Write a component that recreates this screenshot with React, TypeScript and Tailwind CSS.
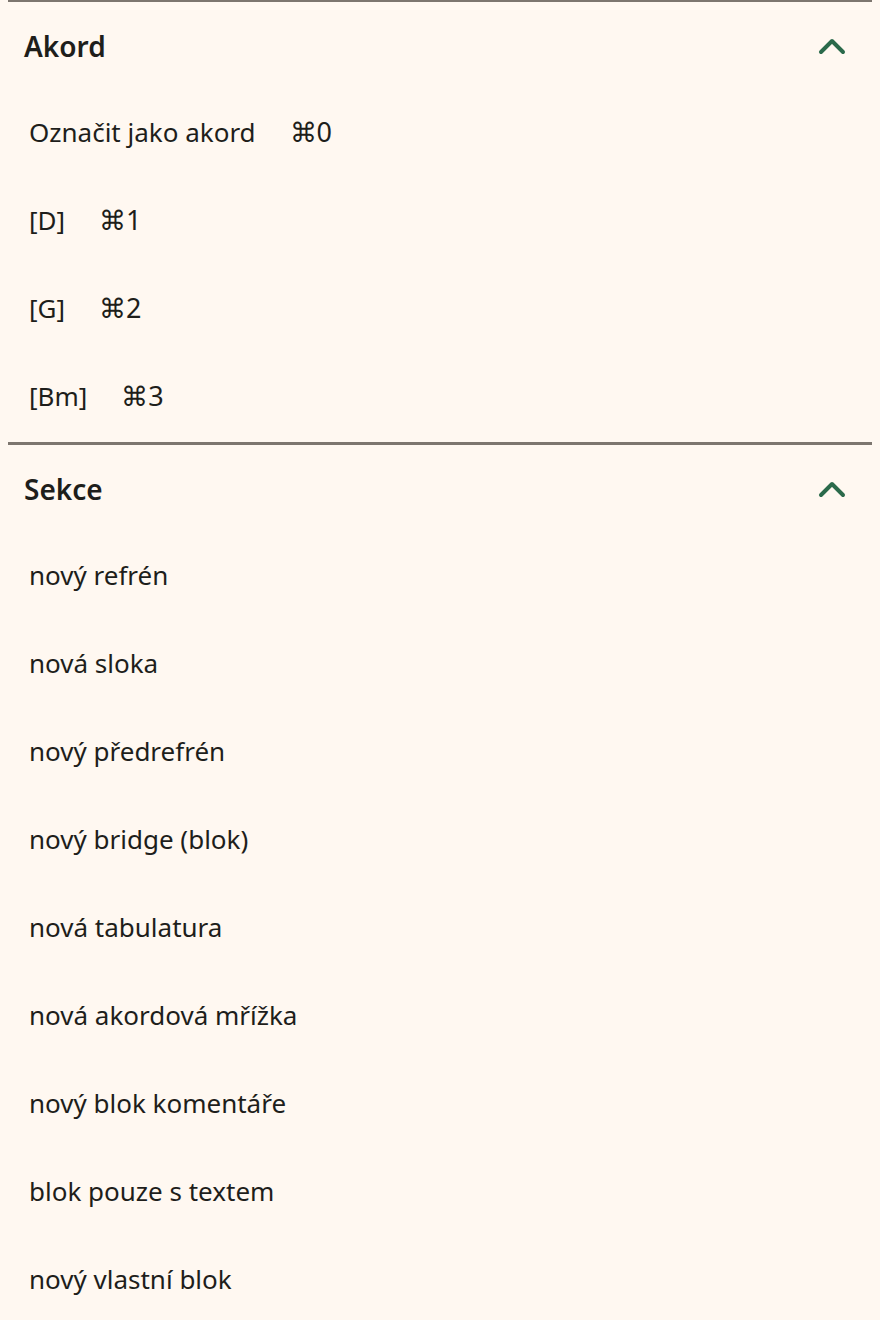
const FONT = { fontFamily: '"Noto Sans", "Open Sans", sans-serif' };

interface Item {
  label: string;
  shortcut?: string;
}

const CHORDS: Item[] = [
  { label: 'Označit jako akord', shortcut: '⌘0' },
  { label: '[D]', shortcut: '⌘1' },
  { label: '[G]', shortcut: '⌘2' },
  { label: '[Bm]', shortcut: '⌘3' },
];

const SECTIONS: Item[] = [
  { label: 'nový refrén' },
  { label: 'nová sloka' },
  { label: 'nový předrefrén' },
  { label: 'nový bridge (blok)' },
  { label: 'nová tabulatura' },
  { label: 'nová akordová mřížka' },
  { label: 'nový blok komentáře' },
  { label: 'blok pouze s textem' },
  { label: 'nový vlastní blok' },
];

function Chevron() {
  return (
    <svg width="28" height="18" viewBox="0 0 28 18" fill="none" className="text-[#2b6a4b]">
      <path d="M3 15 L14 4 L25 15" stroke="currentColor" strokeWidth="4" strokeLinecap="round" strokeLinejoin="round" />
    </svg>
  );
}

function Section({ title, items, borderClass }: { title: string; items: Item[]; borderClass: string }) {
  return (
    <section className={`border-t border-[#7d766f] ${borderClass}`}>
      <button type="button" className="flex h-[88px] w-full items-center justify-between pl-4 pr-[26px]">
        <h2 className="text-[28px] font-semibold text-[#1e1e1b]">{title}</h2>
        <Chevron />
      </button>
      <ul>
        {items.map((it) => (
          <li key={it.label} className="flex h-[88px] items-center pb-[3px] pl-[21px] text-[26px] text-[#1e1e1b]">
            <span>{it.label}</span>
            {it.shortcut && <span className="ml-[34px] text-[27px]">{it.shortcut}</span>}
          </li>
        ))}
      </ul>
    </section>
  );
}

export default function App() {
  return (
    <div className="min-h-[1320px] w-[880px] overflow-hidden bg-[#fff8f1]" style={FONT}>
      <div className="px-2">
        <Section title="Akord" items={CHORDS} borderClass="border-t-2" />
        <Section title="Sekce" items={SECTIONS} borderClass="border-t-[3px]" />
      </div>
    </div>
  );
}
